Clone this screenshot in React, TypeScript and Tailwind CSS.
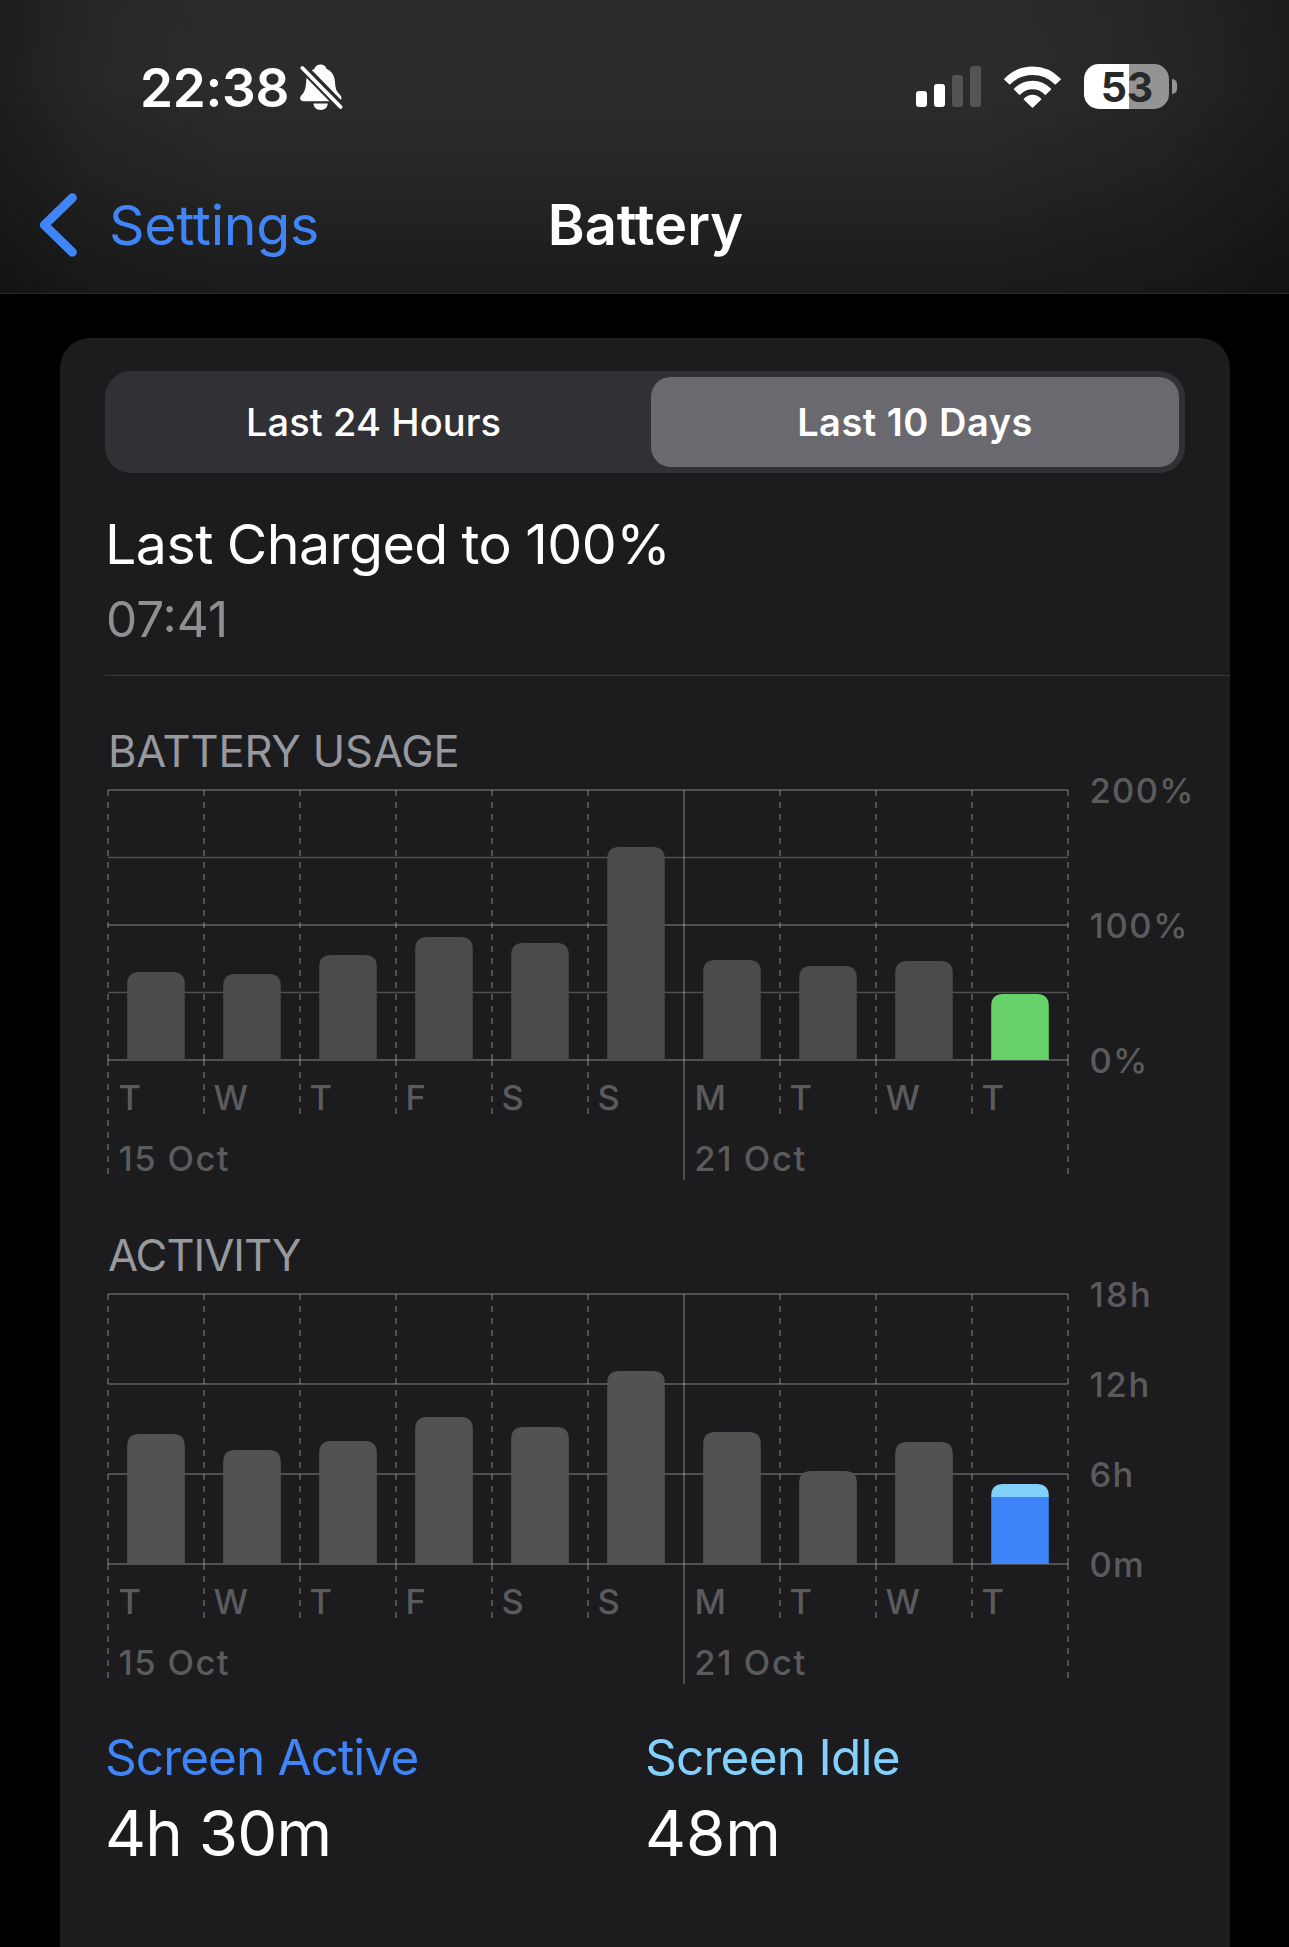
type Segment = {
  from: number;
  to: number;
  color: string;
};

type AxisLabel = {
  y: number;
  text: string;
  tracking: string;
};

type ChartProps = {
  title: string;
  titleClass: string;
  bars: Segment[][];
  gridLines: number[];
  axisLabels: AxisLabel[];
};

const days = ["T", "W", "T", "F", "S", "S", "M", "T", "W", "T"];

const GRID_COLOR = "rgba(235,235,245,0.25)";
const PLOT_HEIGHT = 270;
const DAY_WIDTH = 96;

const grayBars = (heights: number[], color: string): Segment[][] =>
  heights.map((height) => [{ from: 0, to: height, color }]);

const usageBars: Segment[][] = [
  ...grayBars([88, 86, 105, 123, 117, 213, 100, 94, 99], "#4b4b4b"),
  [{ from: 0, to: 66, color: "#69d16a" }],
];

const activityBars: Segment[][] = [
  ...grayBars([130, 114, 123, 147, 137, 193, 132, 93, 122], "#525252"),
  [
    { from: 0, to: 67, color: "#3c84f8" },
    { from: 67, to: 80, color: "#83d0fd" },
  ],
];

const usageLabels: AxisLabel[] = [
  { y: 0, text: "200%", tracking: "tracking-[1.3px]" },
  { y: 135, text: "100%", tracking: "tracking-[1.6px]" },
  { y: 270, text: "0%", tracking: "tracking-[1.2px]" },
];

const activityLabels: AxisLabel[] = [
  { y: 0, text: "18h", tracking: "tracking-[2.2px]" },
  { y: 90, text: "12h", tracking: "tracking-[1.7px]" },
  { y: 180, text: "6h", tracking: "tracking-[1.3px]" },
  { y: 270, text: "0m", tracking: "tracking-[1.2px]" },
];

const BellSlash = () => (
  <svg width="44" height="48" viewBox="0 0 44 48" className="ml-[11px]">
    <mask id="bell-cut">
      <rect width="44" height="48" fill="white" />
      <path d="M-2 -1.4 L46 47.6" stroke="black" strokeWidth="9.2" />
    </mask>
    <g fill="white" mask="url(#bell-cut)">
      <path d="M20.5 .6C23.6 .6 26 2.4 26.6 5C31.6 7 34.4 11.4 34.9 17.2C35.5 24.6 36.1 27 40.2 31C42.6 33.6 41.6 37.2 38 37.2H3.6C.2 37.2 -1 34 1.2 31.6C5 27.4 5.6 24.6 6.2 17.2C6.7 11.4 9.4 7 14.4 5C15 2.4 17.4 .6 20.5 .6Z" />
      <path d="M13.4 39.6H27.8C27.6 43.4 24.6 46 20.6 46C16.6 46 13.6 43.4 13.4 39.6Z" />
    </g>
    <path
      d="M2.4 4 L40.6 43"
      stroke="white"
      strokeWidth="3.8"
      strokeLinecap="round"
    />
  </svg>
);

const SignalBars = () => (
  <div className="flex h-[41px] items-end gap-[7px]">
    <div className="h-[16px] w-[11px] rounded-[3px] bg-white" />
    <div className="h-[23px] w-[11px] rounded-[3px] bg-white" />
    <div className="h-[32px] w-[11px] rounded-[3px] bg-[#545454]" />
    <div className="h-[41px] w-[11px] rounded-[3px] bg-[#545454]" />
  </div>
);

const Wifi = () => (
  <svg width="57" height="42" viewBox="0 0 58 42" className="ml-[23px]">
    <g fill="white" stroke="white" strokeWidth="1.6" strokeLinejoin="round">
      <path d="M0.9 13.1C16.4 -3.1 41.6 -3.1 57.1 13.1L52.2 17.6C39.4 4.8 18.6 4.8 5.8 17.6Z" />
      <path d="M10.9 23.2C20.9 12.9 37.1 12.9 47.1 23.2L42 28.2C34.8 20.7 23.2 20.7 16 28.2Z" />
      <path d="M20.8 33.4C25.5 28.5 32.5 28.5 37.2 33.4L29 41.3Z" />
    </g>
  </svg>
);

const BatteryLevel = () => (
  <div className="ml-[23px] flex items-center gap-[3px]">
    <div className="flex h-[45px] w-[85px] items-center justify-center rounded-[15px] bg-[linear-gradient(90deg,#ffffff_45px,#949494_45px)] pt-px pl-px text-[41px] leading-[44px] font-bold text-[#292929]">
      53
    </div>
    <div className="h-[15px] w-[5px] rounded-r-full bg-[#949494]" />
  </div>
);

const Header = () => (
  <header className="h-[294px] border-b border-[#2b2b2b] bg-[linear-gradient(90deg,rgba(0,0,0,0.32)_0%,rgba(0,0,0,0.12)_7%,transparent_18%,transparent_76%,rgba(0,0,0,0.14)_90%,rgba(0,0,0,0.34)_100%),linear-gradient(180deg,#2b2b2c_0%,#2c2c2c_28%,#262627_58%,#1b1b1b_100%)]">
    <div className="flex pt-[61px] pr-[112px] pl-[140px]">
      <div className="flex h-[54px] items-center">
        <span className="text-[53px] leading-[54px] font-[580] tracking-[-0.3px]">
          22:38
        </span>
        <BellSlash />
      </div>
      <div className="ml-auto flex h-[51px] items-center">
        <SignalBars />
        <Wifi />
        <BatteryLevel />
      </div>
    </div>
    <nav className="mt-[75px] grid h-[70px] grid-cols-3 items-center pr-[40px] pl-[40px]">
      <div className="flex items-center text-[#3f85f7]">
        <svg width="38" height="64" viewBox="0 0 38 64" fill="none">
          <path
            d="M32.4 4.8 L4.4 32 L32.4 59.2"
            stroke="currentColor"
            strokeWidth="9"
            strokeLinecap="round"
            strokeLinejoin="round"
          />
        </svg>
        <span className="ml-[31px] text-[55.5px] leading-[56px] tracking-[-0.3px]">
          Settings
        </span>
      </div>
      <h1 className="pl-[2px] text-center text-[56px] leading-[56px] font-[590]">
        Battery
      </h1>
    </nav>
  </header>
);

const RangeTabs = () => (
  <div className="mt-[33px] ml-[45px] grid h-[102px] w-[1080px] grid-cols-2 rounded-[26px] bg-[#313135] py-[6px] pr-[6px] text-[38px]">
    <button className="text-center font-[480] tracking-[0.1px]">
      Last 24 Hours
    </button>
    <button className="ml-[9px] rounded-[20px] bg-[#6a6970] text-center font-[560] tracking-[0.5px]">
      Last 10 Days
    </button>
  </div>
);

const BarChart = ({
  title,
  titleClass,
  bars,
  gridLines,
  axisLabels,
}: ChartProps) => {
  const right = DAY_WIDTH * days.length;
  return (
    <section className="pl-[45px]">
      <h2 className={titleClass}>{title}</h2>
      <svg
        width="1125"
        height="418"
        viewBox="-3 -24 1125 418"
        className="-mt-[10px] block text-[34.5px] font-medium"
      >
        {gridLines.map((y) => (
          <path
            key={y}
            d={`M0 ${y} H${right}`}
            stroke={GRID_COLOR}
            strokeWidth={Number.isInteger(y) ? 2 : 1.6}
          />
        ))}

        {[...days, ""].map((_, index) => {
          const x = index * DAY_WIDTH;
          const isWeekStart = index === 6;
          const isEdge = index === 0 || index === days.length;
          if (isWeekStart) {
            return (
              <path
                key={x}
                d={`M${x} 0 V390`}
                stroke={GRID_COLOR}
                strokeWidth="2"
              />
            );
          }
          return (
            <path
              key={x}
              d={`M${x} 0 V${PLOT_HEIGHT} M${x} ${PLOT_HEIGHT} V${isEdge ? 384 : 324}`}
              stroke={GRID_COLOR}
              strokeWidth="2"
              strokeDasharray="6 6"
            />
          );
        })}

        {bars.map((segments, index) => {
          const x = index * DAY_WIDTH + 19.2;
          return segments.map(({ from, to, color }, i) => {
            const top = PLOT_HEIGHT - to;
            const bottom = PLOT_HEIGHT - from;
            const isTop = i === segments.length - 1;
            return (
              <path
                key={`${index}-${i}`}
                fill={color}
                d={
                  isTop
                    ? `M${x} ${bottom} V${top + 12} Q${x} ${top} ${x + 12} ${top} H${x + 45.6} Q${x + 57.6} ${top} ${x + 57.6} ${top + 12} V${bottom} Z`
                    : `M${x} ${bottom} V${top} H${x + 57.6} V${bottom} Z`
                }
              />
            );
          });
        })}

        <g fill="#5b5b5e">
          {days.map((day, index) => (
            <text
              key={index}
              x={index * DAY_WIDTH + (index % 6 === 0 ? 10.5 : 9.6)}
              y="319.5"
            >
              {day}
            </text>
          ))}
          <text x="10.5" y="381" className="tracking-[1.4px]">
            15 Oct
          </text>
          <text x="586.3" y="381" className="tracking-[1.6px]">
            21 Oct
          </text>
          {axisLabels.map(({ y, text, tracking }) => (
            <text key={text} x="981.5" y={y + 12.7} className={tracking}>
              {text}
            </text>
          ))}
        </g>
      </svg>
    </section>
  );
};

const App = () => {
  return (
    <div className="h-[1947px] w-[1289px] overflow-hidden bg-black font-['Inter',sans-serif] text-white">
      <Header />
      <main className="mt-[44px] ml-[60px] h-[1609px] w-[1170px] overflow-hidden rounded-t-[30px] bg-[#1c1c1e]">
        <RangeTabs />
        <div className="mt-[41px] ml-[45px] border-b border-[#3b3b3e] pb-[26px]">
          <p className="text-[55.5px] leading-[60px] tracking-[-0.55px] [word-spacing:-1.2px]">
            Last Charged to 100%
          </p>
          <p className="mt-[15px] ml-px text-[49.5px] leading-[60px] text-[#8e8e93]">
            07:41
          </p>
        </div>

        <div className="mt-[50px] flex flex-col gap-[46px]">
          <BarChart
            title="BATTERY USAGE"
            titleClass="pl-[3px] text-[43.5px] leading-[50px] tracking-[-0.12px] text-[#98989f]"
            bars={usageBars}
            gridLines={[0, 67.5, 135, 202.5, 270]}
            axisLabels={usageLabels}
          />
          <BarChart
            title="ACTIVITY"
            titleClass="pl-[3px] text-[43.5px] leading-[50px] tracking-[-0.95px] text-[#98989f]"
            bars={activityBars}
            gridLines={[0, 90, 180, 270]}
            axisLabels={activityLabels}
          />
        </div>

        <div className="mt-[39px] ml-[45px] grid grid-cols-[540px_1fr]">
          <div>
            <p className="text-[49.5px] leading-[60px] tracking-[-0.9px] text-[#3f85f7]">
              Screen Active
            </p>
            <p className="mt-[11px] text-[63.5px] leading-[70px] tracking-[-0.86px]">
              4h 30m
            </p>
          </div>
          <div>
            <p className="text-[49.5px] leading-[60px] tracking-[-0.75px] text-[#83d0fd]">
              Screen Idle
            </p>
            <p className="mt-[11px] text-[63.5px] leading-[70px]">48m</p>
          </div>
        </div>
      </main>
    </div>
  );
};

export default App;
